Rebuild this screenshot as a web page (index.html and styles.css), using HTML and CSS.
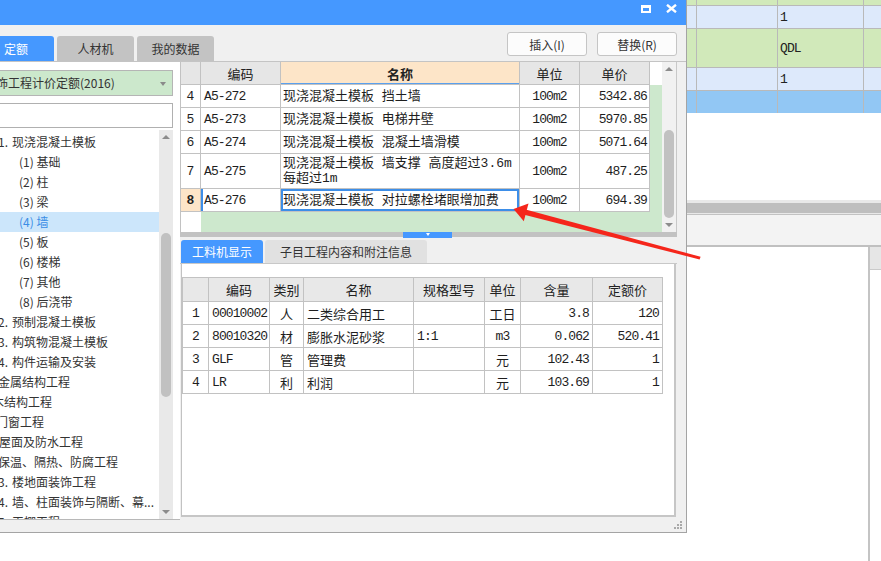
FILE: index.html
```html
<!DOCTYPE html>
<html lang="zh-CN">
<head>
<meta charset="utf-8">
<title>定额查询</title>
<link rel="stylesheet" href="styles.css">
</head>
<body>
<div class="desktop">
  <div class="bg-app">
    <div class="bg-row r0"><span></span><span></span><span></span><span></span></div>
    <div class="bg-row r1"><span></span><span></span><span>1</span><span></span></div>
    <div class="bg-row r2"><span></span><span></span><span>QDL</span><span></span></div>
    <div class="bg-row r3"><span></span><span></span><span>1</span><span></span></div>
    <div class="bg-row r4"><span></span><span></span><span></span><span></span></div>
    <div class="bg-gap"></div>
    <div class="bg-split"></div>
    <div class="bg-band"></div>
    <div class="bg-lower">
      <div class="bg-lower-main"></div>
      <div class="bg-lower-side"><div class="bg-side-box"></div></div>
    </div>
  </div>

  <div class="dialog">
    <div class="titlebar">
      <span class="tb-max"></span>
      <svg class="tb-close" width="11" height="9" viewBox="0 0 11 9"><path d="M1 0.8 L10 8.2 M10 0.8 L1 8.2" stroke="#fff" stroke-width="2.4"/></svg>
    </div>
    <div class="dlg-body">
      <div class="toolbar">
        <div class="tabs">
          <div class="tab tab-active tab-w76">定额</div>
          <div class="tab">人材机</div>
          <div class="tab">我的数据</div>
        </div>
        <div class="buttons">
          <button class="btn">插入(I)</button>
          <button class="btn">替换(R)</button>
        </div>
      </div>

      <div class="main">
        <div class="left">
          <div class="dropdown">装饰工程计价定额(2016)<span class="dd-arrow"></span></div>
          <div class="search"></div>
          <div class="tree">
            <div class="tree-list">
              <div class="ti l1"><span class="no">1.</span>现浇混凝土模板</div>
              <div class="ti l2">(1) 基础</div>
              <div class="ti l2">(2) 柱</div>
              <div class="ti l2">(3) 梁</div>
              <div class="ti l2 ti-sel">(4) 墙</div>
              <div class="ti l2">(5) 板</div>
              <div class="ti l2">(6) 楼梯</div>
              <div class="ti l2">(7) 其他</div>
              <div class="ti l2">(8) 后浇带</div>
              <div class="ti l1"><span class="no">2.</span>预制混凝土模板</div>
              <div class="ti l1"><span class="no">3.</span>构筑物混凝土模板</div>
              <div class="ti l1"><span class="no">4.</span>构件运输及安装</div>
              <div class="ti ch p18">金属结构工程</div>
              <div class="ti ch p12">木结构工程</div>
              <div class="ti ch p16">门窗工程</div>
              <div class="ti ch p19">屋面及防水工程</div>
              <div class="ti ch p18">保温、隔热、防腐工程</div>
              <div class="ti l1"><span class="no">13.</span>楼地面装饰工程</div>
              <div class="ti l1"><span class="no">14.</span>墙、柱面装饰与隔断、幕...</div>
              <div class="ti l1"><span class="no">15.</span>天棚工程</div>
            </div>
            <div class="vscroll tree-scroll">
              <div class="sb-btn"><span class="tri-up"></span></div>
              <div class="thumb tree-thumb"></div>
              <div class="sb-fill"></div>
              <div class="sb-btn"><span class="tri-down"></span></div>
            </div>
          </div>
        </div>

        <div class="right">
          <div class="ugrid">
            <div class="uview">
              <div class="urow uhead">
                <div class="c-no"></div>
                <div>编码</div>
                <div class="h-name">名称</div>
                <div>单位</div>
                <div>单价</div>
              </div>
              <div class="urow">
                <div class="c-no">4</div><div class="c-code">A5-272</div><div class="c-name">现浇混凝土模板 挡土墙</div><div class="c-unit">100m2</div><div class="c-price">5342.86</div>
              </div>
              <div class="urow">
                <div class="c-no">5</div><div class="c-code">A5-273</div><div class="c-name">现浇混凝土模板 电梯井壁</div><div class="c-unit">100m2</div><div class="c-price">5970.85</div>
              </div>
              <div class="urow">
                <div class="c-no">6</div><div class="c-code">A5-274</div><div class="c-name">现浇混凝土模板 混凝土墙滑模</div><div class="c-unit">100m2</div><div class="c-price">5071.64</div>
              </div>
              <div class="urow urow-tall">
                <div class="c-no">7</div><div class="c-code">A5-275</div><div class="c-name">现浇混凝土模板 墙支撑 高度超过3.6m<br>每超过1m</div><div class="c-unit">100m2</div><div class="c-price">487.25</div>
              </div>
              <div class="urow urow-sel">
                <div class="c-no">8</div><div class="c-code">A5-276</div><div class="c-name">现浇混凝土模板 对拉螺栓堵眼增加费</div><div class="c-unit">100m2</div><div class="c-price">694.39</div>
              </div>
            </div>
            <div class="vscroll grid-scroll">
              <div class="sb-btn"><span class="tri-up"></span></div>
              <div class="thumb grid-thumb"></div>
              <div class="sb-fill"></div>
              <div class="sb-btn"><span class="tri-down"></span></div>
            </div>
          </div>

          <div class="splitter"><div class="split-handle"><span class="tri-small"></span></div></div>

          <div class="ltabs">
            <div class="ltab ltab-active">工料机显示</div>
            <div class="ltab">子目工程内容和附注信息</div>
          </div>

          <div class="lpanel">
            <div class="lgrid">
              <div class="lrow lhead">
                <div></div><div>编码</div><div>类别</div><div>名称</div><div>规格型号</div><div>单位</div><div>含量</div><div>定额价</div>
              </div>
              <div class="lrow">
                <div class="m ctr">1</div><div class="m">00010002</div><div class="ctr">人</div><div>二类综合用工</div><div class="m"></div><div class="ctr">工日</div><div class="m rt">3.8</div><div class="m rt">120</div>
              </div>
              <div class="lrow">
                <div class="m ctr">2</div><div class="m">80010320</div><div class="ctr">材</div><div>膨胀水泥砂浆</div><div class="m">1:1</div><div class="m ctr">m3</div><div class="m rt">0.062</div><div class="m rt">520.41</div>
              </div>
              <div class="lrow">
                <div class="m ctr">3</div><div class="m">GLF</div><div class="ctr">管</div><div>管理费</div><div class="m"></div><div class="ctr">元</div><div class="m rt">102.43</div><div class="m rt">1</div>
              </div>
              <div class="lrow">
                <div class="m ctr">4</div><div class="m">LR</div><div class="ctr">利</div><div>利润</div><div class="m"></div><div class="ctr">元</div><div class="m rt">103.69</div><div class="m rt">1</div>
              </div>
            </div>
          </div>
        </div>
      </div>

      <div class="footer">
        <svg class="grip" width="9" height="9" viewBox="0 0 9 9">
          <rect x="6" y="0" width="2" height="2" fill="#a9a9a9"/>
          <rect x="3" y="3" width="2" height="2" fill="#a9a9a9"/>
          <rect x="6" y="3" width="2" height="2" fill="#a9a9a9"/>
          <rect x="0" y="6" width="2" height="2" fill="#a9a9a9"/>
          <rect x="3" y="6" width="2" height="2" fill="#a9a9a9"/>
          <rect x="6" y="6" width="2" height="2" fill="#a9a9a9"/>
        </svg>
      </div>
    </div>
  </div>

  <svg class="arrow" width="881" height="561" viewBox="0 0 881 561">
    <polygon points="525.6,209.4 700.6,256.8 699.6,259.4 524.2,214.8" fill="#f5261b"/>
    <polygon points="513.5,209 528.5,203.6 523.8,221.2" fill="#f5261b"/>
  </svg>
</div>
</body>
</html>
```

FILE: styles.css
```css
* { box-sizing: border-box; margin: 0; padding: 0; }

html, body {
  width: 881px;
  height: 561px;
  overflow: hidden;
  background: #fff;
}

body {
  font-family: "Noto Sans CJK SC", "Noto Sans", sans-serif;
  font-size: 12px;
  color: #333;
}

.desktop {
  position: relative;
  width: 881px;
  height: 561px;
  overflow: hidden;
  background: #fff;
}

/* ---------- background application (behind the dialog) ---------- */
.bg-app {
  position: absolute;
  left: 687px;
  top: 0;
  width: 194px;
  height: 561px;
  display: flex;
  flex-direction: column;
}

.bg-row {
  display: grid;
  grid-template-columns: 10px 81px 86px 1fr;
  border-bottom: 1px solid #b9b9b9;
  flex-shrink: 0;
}

.bg-row > span {
  border-right: 1px solid #b9b9b9;
  font-family: "Liberation Mono", monospace;
  font-size: 13px;
  letter-spacing: -0.9px;
  color: #222;
  padding-left: 2px;
  display: flex;
  align-items: center;
}

.bg-row > span:last-child { border-right: 0; }

.r0 { height: 6px; background: #d1e9ba; }
.r1 { height: 23px; background: #dde9fb; }
.r2 { height: 39px; background: #d1e9ba; }
.r3 { height: 23px; background: #dde9fb; }
.r4 { height: 22px; background: #92c7f4; border-bottom: 0; }

.bg-gap { height: 87px; flex-shrink: 0; }

.bg-split {
  height: 14px;
  flex-shrink: 0;
  border-top: 3px solid #e8e8e8;
  border-bottom: 1px solid #e8e8e8;
  background: #bebebe;
}

.bg-band {
  height: 33px;
  flex-shrink: 0;
  border-top: 1px solid #c2c2c2;
  border-bottom: 2px solid #c0c0c0;
  background: #f3f3f3;
}

.bg-lower {
  flex: 1;
  display: flex;
}

.bg-lower-main { flex: 1; }

.bg-lower-side {
  width: 13px;
  border-left: 2px solid #c4c4c4;
}

.bg-side-box {
  height: 23px;
  background: #e6e6e6;
  border-bottom: 1px solid #cacaca;
}

/* ---------- dialog window ---------- */
.dialog {
  position: absolute;
  left: -30px;
  top: 0;
  width: 717px;
  height: 533px;
  display: flex;
  flex-direction: column;
  border-right: 1px solid #a4a4a4;
  border-bottom: 1px solid #a4a4a4;
}

.titlebar {
  height: 25px;
  flex-shrink: 0;
  background: #4598ff;
  display: flex;
  justify-content: flex-end;
  align-items: flex-start;
  gap: 15px;
  padding-right: 9px;
}

.tb-max {
  display: block;
  width: 10px;
  height: 8px;
  margin-top: 5px;
  border: 2px solid #fff;
  border-top-width: 3px;
}

.tb-close {
  display: block;
  margin-top: 4px;
}

.dlg-body {
  flex: 1;
  min-height: 0;
  background: #f0f0f0;
  display: flex;
  flex-direction: column;
}

.toolbar {
  height: 36px;
  flex-shrink: 0;
  display: flex;
  justify-content: space-between;
}

.tabs {
  display: flex;
  align-items: flex-end;
  gap: 3px;
  padding-left: 8px;
}

.tab {
  width: 77px;
  height: 25px;
  background: #c3c3c3;
  border-radius: 3px 3px 0 0;
  display: flex;
  align-items: center;
  justify-content: center;
  font-size: 12px;
  color: #333;
}

.tab-w76 { width: 76px; }

.tab-active {
  background: #4598ff;
  color: #fff;
}

.buttons {
  display: flex;
  gap: 10px;
  padding-top: 7px;
  padding-right: 9px;
}

.btn {
  width: 80px;
  height: 24px;
  background: #fcfcfc;
  border: 1px solid #c5c5c5;
  border-radius: 3px;
  font-family: "Noto Sans CJK SC", "Noto Sans", sans-serif;
  font-size: 12px;
  color: #333;
}

.main {
  flex: 1;
  min-height: 0;
  display: flex;
  border-top: 1px solid #c4c4c4;
  padding-right: 9px;
}

/* ---------- left panel ---------- */
.left {
  width: 210px;
  min-height: 0;
  background: #fff;
  display: flex;
  flex-direction: column;
  padding: 8px 7px 0 10px;
  border-bottom: 1px solid #b8b8b8;
}

.dropdown {
  position: relative;
  flex-shrink: 0;
  height: 26px;
  background: #cce8cc;
  border: 1px solid #b5b5b5;
  line-height: 24px;
  padding-left: 3px;
  font-size: 12px;
  color: #333;
  white-space: nowrap;
}

.dd-arrow {
  position: absolute;
  right: 6px;
  top: 11px;
  width: 0;
  height: 0;
  border-left: 3.5px solid transparent;
  border-right: 3.5px solid transparent;
  border-top: 4px solid #8a8a8a;
}

.search {
  height: 25px;
  flex-shrink: 0;
  margin-top: 7px;
  border: 1px solid #b0b0b0;
  background: #fff;
}

.tree {
  flex: 1;
  min-height: 0;
  margin-top: 2px;
  display: flex;
  overflow: hidden;
}

.tree-list {
  flex: 1;
  padding-top: 2px;
  overflow: hidden;
}

.ti {
  height: 20px;
  line-height: 20px;
  font-size: 12px;
  color: #333;
  white-space: nowrap;
}

.ti .no {
  display: inline-block;
  width: 32px;
  padding-right: 4px;
  text-align: right;
}

.l2 { padding-left: 39px; }

.ti-sel {
  background: #cce6fb;
  color: #3b8ee6;
}

.p12 { padding-left: 12px; }
.p16 { padding-left: 16px; }
.p18 { padding-left: 18px; }
.p19 { padding-left: 19px; }

/* scrollbars */
.vscroll {
  width: 14px;
  flex-shrink: 0;
  display: flex;
  flex-direction: column;
  align-items: center;
}

.tree-scroll { background: #e9e9e9; }
.grid-scroll { background: #f1f1f1; }

.sb-btn {
  width: 14px;
  height: 14px;
  flex-shrink: 0;
  display: flex;
  align-items: center;
  justify-content: center;
}

.sb-fill { flex: 1; }

.tri-up, .tri-down {
  width: 0;
  height: 0;
  border-left: 4px solid transparent;
  border-right: 4px solid transparent;
}

.tri-up { border-bottom: 4px solid #8c8c8c; }
.tri-down { border-top: 4px solid #8c8c8c; }

.thumb {
  width: 10px;
  flex-shrink: 0;
  background: #c1c1c1;
  border-radius: 5px;
}

.tree-thumb { margin-top: 89px; height: 164px; }
.grid-thumb { margin-top: 54px; height: 88px; }

/* ---------- right panel ---------- */
.right {
  flex: 1;
  min-height: 0;
  display: flex;
  flex-direction: column;
}

.ugrid {
  height: 170px;
  flex-shrink: 0;
  display: flex;
  border-left: 1px solid #c2c2c2;
  border-right: 1px solid #c8c8c8;
}

.uview {
  flex: 1;
  background:
    linear-gradient(#fff, #fff) 0 0 / 100% 23px no-repeat,
    linear-gradient(#fff, #fff) 0 0 / 20px 100% no-repeat,
    #cde8cd;
}

.urow {
  display: grid;
  grid-template-columns: 20px 80px 239px 60px 70px;
  height: 23px;
}

.urow-tall { height: 35px; }

.urow > div {
  border-right: 1px solid #c2c2c2;
  border-bottom: 1px solid #c2c2c2;
  background: #fff;
  display: flex;
  align-items: center;
  padding: 0 3px;
  white-space: nowrap;
  font-family: "Liberation Mono", "Noto Sans CJK SC", monospace;
  font-size: 13px;
  color: #1e1e1e;
}

.uhead > div {
  background: #e6e6e6;
  justify-content: center;
  font-family: "Noto Sans CJK SC", sans-serif;
  color: #222;
}

.uhead > .h-name {
  background: #fde5c8;
  font-weight: bold;
  box-shadow: inset 0 -1px 0 #5aa0ee;
}

.urow > .c-no {
  justify-content: center;
  padding: 0;
}

.urow > .c-code,
.urow > .c-unit,
.urow > .c-price {
  letter-spacing: -0.9px;
}

.urow > .c-name {
  padding-left: 2px;
  line-height: 15px;
}

.urow > .c-unit { justify-content: center; }
.urow > .c-price { justify-content: flex-end; padding-right: 2px; }

.urow-sel > .c-no {
  background: #fde5c8;
  font-weight: bold;
}

.urow-sel > .c-code { box-shadow: inset 2px 0 0 #3d8ee8; }
.urow-sel > .c-name { box-shadow: inset 0 0 0 2px #3d8ee8; }

.splitter {
  height: 5px;
  flex-shrink: 0;
  background: #c2c2c2;
  padding-left: 223px;
}

.split-handle {
  width: 49px;
  height: 6px;
  background: #4598ff;
  display: flex;
  justify-content: center;
  padding-top: 1px;
}

.tri-small {
  width: 0;
  height: 0;
  border-left: 2.5px solid transparent;
  border-right: 2.5px solid transparent;
  border-top: 3px solid #fff;
}

.ltabs {
  margin-top: 3px;
  flex-shrink: 0;
  display: flex;
  gap: 2px;
  padding-left: 1px;
  border-bottom: 1px solid #c8c8c8;
}

.ltab {
  height: 23px;
  padding: 0 15px;
  background: #e1e1e1;
  border-radius: 3px 3px 0 0;
  display: flex;
  align-items: center;
  font-size: 12px;
  color: #333;
}

.ltab-active {
  width: 82px;
  background: #4598ff;
  color: #fff;
  justify-content: center;
  padding: 0;
}

.lpanel {
  flex: 1;
  min-height: 0;
  margin: 0 1px 3px 1px;
  background: #fff;
  border-left: 1px solid #c2c2c2;
  border-right: 2px solid #c6c6c6;
  border-bottom: 2px solid #c6c6c6;
  padding-top: 13px;
}

.lgrid {
  width: 481px;
  border-left: 1px solid #c2c2c2;
  border-top: 1px solid #c2c2c2;
}

.lrow {
  display: grid;
  grid-template-columns: 26px 61px 34px 110px 71px 36px 72px 70px;
  height: 23px;
}

.lrow > div {
  border-right: 1px solid #c2c2c2;
  border-bottom: 1px solid #c2c2c2;
  display: flex;
  align-items: center;
  padding: 0 3px;
  white-space: nowrap;
  font-size: 13px;
  color: #1e1e1e;
}

.lhead { height: 24px; }

.lhead > div {
  background: #e8e8e8;
  justify-content: center;
  color: #222;
}

.lrow > .m {
  font-family: "Liberation Mono", "Noto Sans CJK SC", monospace;
  letter-spacing: -0.9px;
}

.lrow > .ctr { justify-content: center; }
.lrow > .rt { justify-content: flex-end; }

.footer {
  height: 12px;
  flex-shrink: 0;
  display: flex;
  justify-content: flex-end;
  align-items: flex-start;
  padding: 1px 3px 0 0;
}

.grip { display: block; }

/* ---------- annotation arrow ---------- */
.arrow {
  position: absolute;
  left: 0;
  top: 0;
  pointer-events: none;
}
```
